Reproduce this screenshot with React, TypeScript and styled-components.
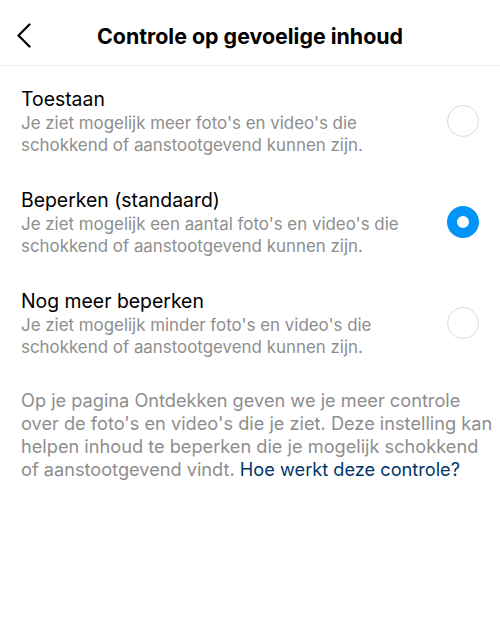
import styled, { createGlobalStyle } from "styled-components";

const GlobalStyle = createGlobalStyle`
  body {
    margin: 0;
    background: #ffffff;
    font-family: Inter, "Noto Sans", "Liberation Sans", sans-serif;
    -webkit-font-smoothing: antialiased;
  }
`;

const Page = styled.div`
  width: 500px;
  min-height: 633px;
  background: #ffffff;
  color: #000000;
`;

const Header = styled.header`
  height: 66px;
  display: grid;
  grid-template-columns: 48px 1fr 48px;
  align-items: center;
  border-bottom: 1px solid #ececec;
  box-sizing: border-box;
  padding-top: 7px;
`;

const BackButton = styled.button`
  border: none;
  background: none;
  padding: 0 0 0 15px;
  display: flex;
  align-items: center;
  cursor: pointer;
`;

const Title = styled.h1`
  margin: 0;
  text-align: center;
  font-size: 21.4px;
  font-weight: 700;
`;

const List = styled.div`
  display: flex;
  flex-direction: column;
  gap: 31px;
  padding: 20px 21px 0 21px;
`;

const Option = styled.label`
  display: flex;
  align-items: center;
  gap: 16px;
  cursor: pointer;
`;

const OptionText = styled.div`
  flex: 1;
`;

const OptionTitle = styled.div`
  font-size: 19.4px;
  line-height: 26px;
`;

const OptionDesc = styled.div`
  font-size: 16.9px;
  line-height: 22px;
  color: #8e8e8e;
`;

const Radio = styled.span<{ $checked: boolean }>`
  width: 32px;
  height: 32px;
  border-radius: 50%;
  box-sizing: border-box;
  flex-shrink: 0;
  border: ${(p) => (p.$checked ? "10.5px solid #0095f6" : "1.5px solid #dbdbdb")};
  background: #ffffff;
`;

const Footer = styled.p`
  margin: 0;
  padding: 31px 6px 0 21px;
  font-size: 18.2px;
  line-height: 23px;
  color: #8e8e8e;
`;

const Link = styled.a`
  color: #00376b;
  text-decoration: none;
`;

const options = [
  {
    title: "Toestaan",
    desc: "Je ziet mogelijk meer foto's en video's die schokkend of aanstootgevend kunnen zijn.",
    checked: false,
  },
  {
    title: "Beperken (standaard)",
    desc: "Je ziet mogelijk een aantal foto's en video's die schokkend of aanstootgevend kunnen zijn.",
    checked: true,
  },
  {
    title: "Nog meer beperken",
    desc: "Je ziet mogelijk minder foto's en video's die schokkend of aanstootgevend kunnen zijn.",
    checked: false,
  },
];

const App = () => {
  return (
    <Page>
      <GlobalStyle />
      <Header>
        <BackButton aria-label="Terug">
          <svg width="20" height="26" viewBox="0 0 20 26" fill="none">
            <path
              d="M14.5 1.5 L3.5 12.5 L14.5 23.5"
              stroke="#000"
              strokeWidth="2.2"
              strokeLinecap="round"
              strokeLinejoin="round"
            />
          </svg>
        </BackButton>
        <Title>Controle op gevoelige inhoud</Title>
        <span />
      </Header>
      <List>
        {options.map((o) => (
          <Option key={o.title}>
            <OptionText>
              <OptionTitle>{o.title}</OptionTitle>
              <OptionDesc>{o.desc}</OptionDesc>
            </OptionText>
            <Radio $checked={o.checked} />
          </Option>
        ))}
      </List>
      <Footer>
        Op je pagina Ontdekken geven we je meer controle
        <br />
        over de foto's en video's die je ziet. Deze instelling kan
        <br />
        helpen inhoud te beperken die je mogelijk schokkend
        <br />
        of aanstootgevend vindt. <Link href="#">Hoe werkt deze controle?</Link>
      </Footer>
    </Page>
  );
};

export default App;
